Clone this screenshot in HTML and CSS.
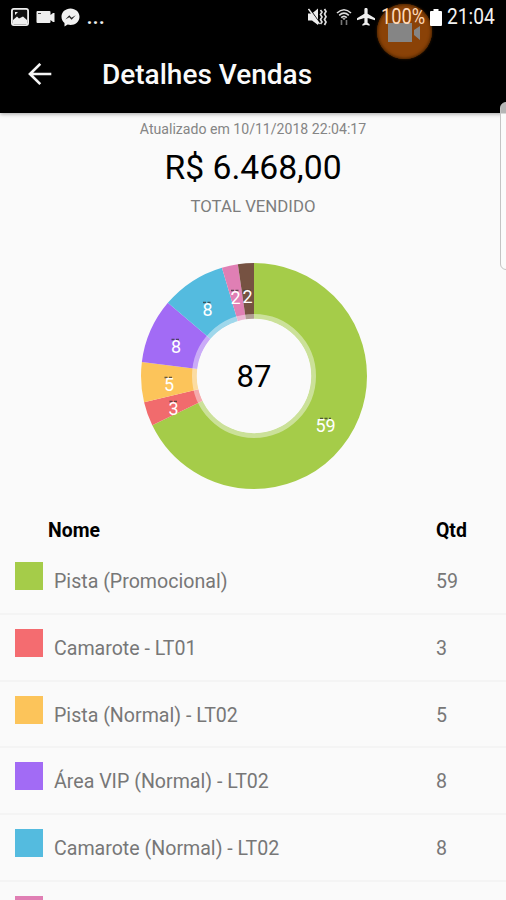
FILE: index.html
```html
<!DOCTYPE html>
<html lang="pt-BR">
<head>
    <meta charset="UTF-8">
    <meta name="viewport" content="width=device-width, initial-scale=1.0">
    <title>Detalhes Vendas</title>
    <link rel="stylesheet" href="styles.css">
</head>
<body>
    <div class="screen">
        <header class="top">
            <!-- Status bar -->
            <div class="status-bar">
                <div class="status-left">
                    <svg width="18" height="18" viewBox="0 0 18 18">
                        <rect x="0.9" y="0.9" width="16.2" height="16.2" rx="2" fill="#111" stroke="#eee" stroke-width="1.8"/>
                        <path d="M2 15V12L6 8.5L8 10.5L12 8.5L16 12V16H2Z M4 4H7L4 7Z" fill="#eee"/>
                    </svg>
                    <svg width="19" height="14" viewBox="0 0 19 14">
                        <path d="M1.5 1H13.5Q14.5 1 14.5 2V5L17 3H18.5V12H17L14.5 10V12Q14.5 13 13.5 13H1.5Q0.5 13 0.5 12V2Q0.5 1 1.5 1Z" fill="#eee"/>
                        <path d="M2 3.5H5" stroke="#444"/>
                    </svg>
                    <svg width="19" height="19" viewBox="0 0 19 19">
                        <path d="M9.5 0.5C4.5 0.5 0.5 4.1 0.5 8.7C0.5 11.3 1.6 13.5 3.5 15V18.5L6.7 16.6C12.8 18.2 18.5 14.4 18.5 8.7C18.5 4.1 14.5 0.5 9.5 0.5Z" fill="#f2f2f2"/>
                        <path d="M4.3 11.5L8.3 7.2L10.5 9.7L14.7 7.2L10.6 11.8L8.3 9.3Z" fill="#222"/>
                    </svg>
                    <span class="more">...</span>
                </div>
                <div class="status-right">
                    <svg width="19" height="18" viewBox="0 0 19 18">
                        <path d="M0 5.5H4L10 0.5V17L4 12.5H0Z" fill="#eee"/>
                        <path d="M1.5 0.5L11 14" stroke="#000" stroke-width="1.2"/>
                        <path d="M0.5 1L11.5 16" stroke="#eee" stroke-width="1.4"/>
                        <path d="M12.5 2L14 4L12.5 6.5L14 9L12.5 11.5L14 14L12.5 16 M16.5 1L18 3.5L16.5 6L18 8.7L16.5 11.5L18 14L16.5 17" fill="none" stroke="#ddd" stroke-width="1.7"/>
                    </svg>
                    <svg class="wifi" width="16" height="18" viewBox="0 0 16 18">
                        <path d="M1 5Q8 -1.5 15 5 M3.2 7.3Q8 3 12.8 7.3 M5.2 9.6Q8 7 10.8 9.6" fill="none" stroke="#ddd" stroke-width="1.6"/>
                        <path d="M6.2 10.2H9.8L8 12Z" fill="#ddd"/>
                        <path d="M5.5 12V17 M10.5 12V17" stroke="#777" stroke-width="1.6"/>
                    </svg>
                    <svg class="plane" width="18" height="18" viewBox="2 2 20 20">
                        <path d="M22 15.5V13.5L13.8 8.5V3.5C13.8 2.5 13 2 12 2S10.2 2.5 10.2 3.5V8.5L2 13.5V15.5L10.2 13V18.5L8 20V21.8L12 20.7L16 21.8V20L13.8 18.5V13Z" fill="#eee"/>
                    </svg>
                    <span class="percent">100%</span>
                    <svg class="battery" width="12" height="17" viewBox="0 0 12 17">
                        <path d="M3.5 0H8.5V2H11Q12 2 12 3V16Q12 17 11 17H1Q0 17 0 16V3Q0 2 1 2H3.5Z" fill="#fff"/>
                    </svg>
                    <span class="clock">21:04</span>
                </div>
            </div>

            <!-- App bar -->
            <div class="app-bar">
                <svg class="back" width="24" height="24" viewBox="0 0 24 24">
                    <path d="M23.3 11H2.5 M12.3 0.9L2 11L12.3 21.1" fill="none" stroke="#f4f4f4" stroke-width="2.7"/>
                </svg>
                <h1>Detalhes Vendas</h1>
            </div>

            <!-- Floating recorder button -->
            <div class="recorder">
                <svg width="34" height="22" viewBox="0 0 34 22">
                    <path d="M1 1H25V20H1Z M27 8L33 4V18L27 13Z" fill="#858585"/>
                </svg>
            </div>
        </header>

        <!-- Totals -->
        <section class="summary">
            <p class="updated">Atualizado em 10/11/2018 22:04:17</p>
            <p class="total">R$ 6.468,00</p>
            <p class="caption">TOTAL VENDIDO</p>
        </section>

        <!-- Donut chart, one unit of path length per ticket -->
        <svg class="chart" width="228" height="228" viewBox="-114 -114 228 228">
            <g class="slices" transform="rotate(-90)">
                <circle r="85" pathLength="87" stroke="#a5cc49" stroke-dasharray="59 87"/>
                <circle r="85" pathLength="87" stroke="#f16b6d" stroke-dasharray="3 87" stroke-dashoffset="-59"/>
                <circle r="85" pathLength="87" stroke="#fcc45a" stroke-dasharray="5 87" stroke-dashoffset="-62"/>
                <circle r="85" pathLength="87" stroke="#a26bf5" stroke-dasharray="8 87" stroke-dashoffset="-67"/>
                <circle r="85" pathLength="87" stroke="#54bbdf" stroke-dasharray="8 87" stroke-dashoffset="-75"/>
                <circle r="85" pathLength="87" stroke="#e07fb4" stroke-dasharray="2 87" stroke-dashoffset="-83"/>
                <circle r="85" pathLength="87" stroke="#765242" stroke-dasharray="2 87" stroke-dashoffset="-85"/>
            </g>
            <circle r="59.5" fill="none" stroke="#fafafa" stroke-opacity="0.45" stroke-width="5"/>
            <circle r="57.2" fill="#fafafa"/>
            <g class="marks">
                <path d="M66 42.5H77 M-84.5 25.5H-77 M-89.5 1.5H-82 M-82.5 -36.5H-75 M-51 -73.5H-43.5 M-23 -85.5H-15.5 M-10.5 -85.5H-3"/>
            </g>
            <g class="values">
                <text x="71.5" y="56">59</text>
                <text x="-80.5" y="39">3</text>
                <text x="-85" y="15">5</text>
                <text x="-78" y="-23">8</text>
                <text x="-46.5" y="-60">8</text>
                <text x="-18.5" y="-72">2</text>
                <text x="-6.5" y="-73">2</text>
            </g>
            <text class="sum" x="0" y="11">87</text>
        </svg>

        <!-- Ticket list -->
        <div class="list">
            <div class="list-head">
                <span class="name">Nome</span>
                <span class="qty">Qtd</span>
            </div>
            <div class="row">
                <span class="swatch green"></span>
                <span class="name">Pista (Promocional)</span>
                <span class="qty">59</span>
            </div>
            <div class="row">
                <span class="swatch red"></span>
                <span class="name">Camarote - LT01</span>
                <span class="qty">3</span>
            </div>
            <div class="row">
                <span class="swatch yellow"></span>
                <span class="name">Pista (Normal) - LT02</span>
                <span class="qty">5</span>
            </div>
            <div class="row">
                <span class="swatch purple"></span>
                <span class="name">Área VIP (Normal) - LT02</span>
                <span class="qty">8</span>
            </div>
            <div class="row">
                <span class="swatch blue"></span>
                <span class="name">Camarote (Normal) - LT02</span>
                <span class="qty">8</span>
            </div>
            <div class="row">
                <span class="swatch pink"></span>
            </div>
        </div>

        <!-- Edge panel handle -->
        <div class="edge-handle"></div>
    </div>
</body>
</html>
```
FILE: styles.css
```css
* {
    box-sizing: border-box;
}
body {
    margin: 0;
    background-color: #fafafa;
    font-family: Roboto, sans-serif;
    color: #000;
}
svg {
    display: block;
    flex: none;
}
.screen {
    position: relative;
    width: 506px;
    height: 900px;
    overflow: hidden;
    display: flex;
    flex-direction: column;
    align-items: center;
}

/* Black header */
.top {
    position: relative;
    flex: none;
    width: 100%;
    height: 113px;
    background-color: #000;
    box-shadow: 0 1px 4px rgba(0, 0, 0, 0.35);
}
.status-bar {
    display: flex;
    justify-content: space-between;
    height: 36px;
    padding: 0 11px;
}
.status-left, .status-right {
    display: flex;
    align-items: center;
    height: 34px;
}
.status-left {
    gap: 6.5px;
}
.more {
    color: #eee;
    font-size: 22px;
    line-height: 24px;
    font-weight: 500;
}
.status-right {
    position: relative;
    z-index: 1;
}
.wifi {
    margin-left: 9px;
}
.plane {
    margin-left: 5px;
}
.percent, .clock {
    font-size: 22px;
    line-height: 34px;
    white-space: nowrap;
    transform-origin: left;
}
.percent {
    width: 45px;
    margin-left: 6px;
    color: #ffd9b8;
    transform: scaleX(0.83);
}
.battery {
    margin-left: 4px;
}
.clock {
    width: 48px;
    margin-left: 5px;
    color: #f2f2f2;
    transform: scaleX(0.87);
}
.app-bar {
    display: flex;
    align-items: center;
    height: 77px;
    padding-left: 28px;
}
.app-bar h1 {
    margin: 0 0 0 50px;
    color: #fafafa;
    font-size: 28px;
    font-weight: 500;
}
.recorder {
    position: absolute;
    left: 377px;
    top: 4px;
    width: 55px;
    height: 55px;
    padding: 18px 0 0 10px;
    border-radius: 50%;
    background-color: #8a4207;
    box-shadow: inset 0 0 3px 1px #4d2500, 0 0 3px #3a1c00;
}

/* Totals */
.summary {
    flex: none;
    padding-top: 7px;
    text-align: center;
}
.summary p {
    margin: 0;
}
.updated {
    color: #858585;
    font-size: 14.1px;
    line-height: 18px;
}
.summary .total {
    padding-top: 1px;
    font-size: 33.7px;
    line-height: 57px;
}
.caption {
    color: #7d7d7d;
    font-size: 16.8px;
    line-height: 20px;
}

/* Donut chart */
.chart {
    margin: 46px 0 0 1px;
}
.slices circle {
    fill: none;
    stroke-width: 56px;
}
.marks path {
    stroke: #333;
    stroke-opacity: 0.75;
    stroke-width: 1.5px;
    stroke-dasharray: 3 1.5;
}
.values text {
    fill: #fff;
    font-size: 18px;
    text-anchor: middle;
}
.sum {
    font-size: 31px;
    text-anchor: middle;
}

/* List */
.list {
    flex: none;
    width: 100%;
    margin-top: 24px;
}
.list-head {
    display: flex;
    height: 34px;
    padding-left: 48px;
    font-size: 19.4px;
    font-weight: 700;
    line-height: 33px;
}
.list-head .name {
    width: 388px;
}
.row {
    display: flex;
    height: 66.8px;
    padding: 14px 0 0 15px;
    border-bottom: 2px solid #f4f4f4;
    color: #777;
    font-size: 19.6px;
}
.row .name {
    width: 382px;
    margin-left: 11px;
    line-height: 40px;
}
.row .qty {
    line-height: 40px;
}
.swatch {
    width: 28px;
    height: 28px;
}
.green {
    background-color: #a5cc49;
}
.red {
    background-color: #f46c70;
}
.yellow {
    background-color: #fcc45a;
}
.purple {
    background-color: #a26bf5;
}
.blue {
    background-color: #54bbdf;
}
.pink {
    background-color: #e07fb4;
}

.edge-handle {
    position: absolute;
    right: -10px;
    top: 102px;
    width: 16px;
    height: 168px;
    border: 1px solid #c4c4c4;
    border-radius: 6px;
    background: linear-gradient(#b5b5b5 10px, #fbfbfb 11px);
}
```
